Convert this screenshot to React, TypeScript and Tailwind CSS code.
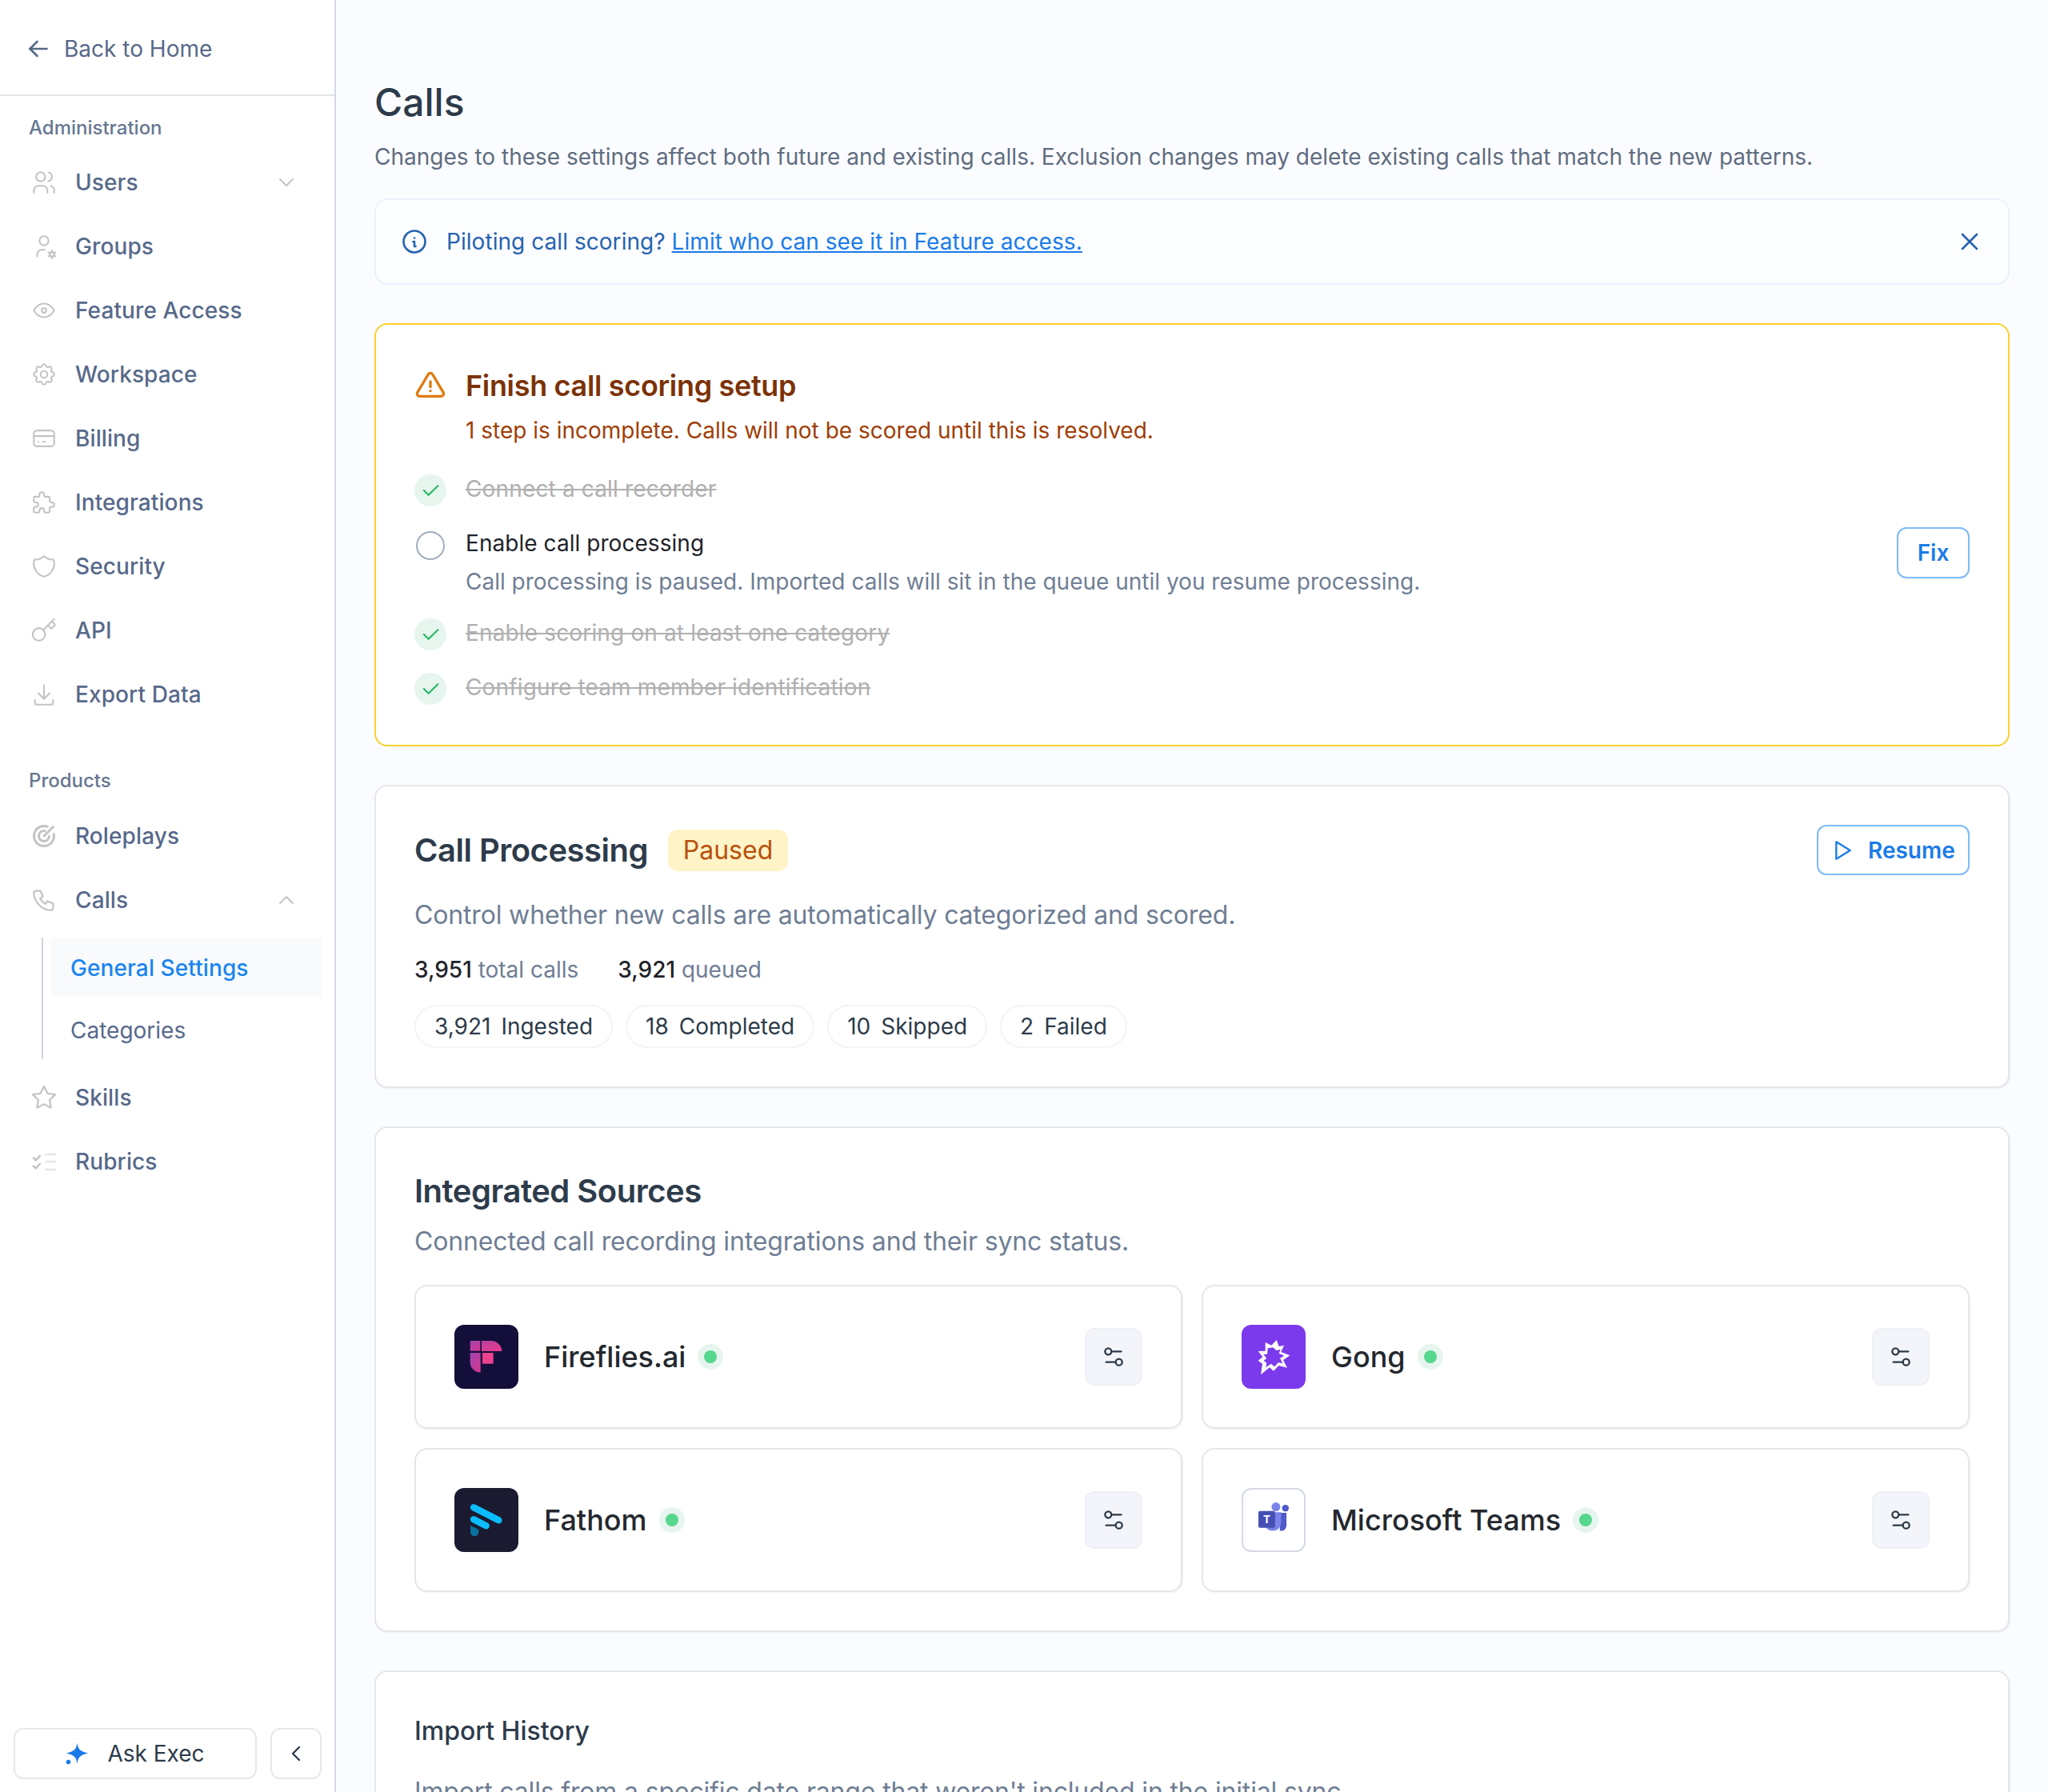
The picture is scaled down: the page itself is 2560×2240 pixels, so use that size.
import React from 'react';
import {
  TbArrowLeft,
  TbUsers,
  TbUserCog,
  TbEye,
  TbSettings,
  TbCreditCard,
  TbPuzzle,
  TbShield,
  TbDownload,
  TbPhone,
  TbStar,
  TbChevronDown,
  TbChevronUp,
  TbChevronLeft,
  TbAlertTriangle,
  TbCheck,
  TbInfoCircle,
  TbX,
  TbPlayerPlay,
} from 'react-icons/tb';
import { Key, Settings2 } from 'lucide-react';

const RubricsIcon = ({ className }: { className?: string }) => (
  <svg viewBox="-3 -3 34 34" fill="none" className={className}>
    <path d="M0.800 9.500l2.800 2.800 5.400-5.400M0.800 19.500l2.800 2.800 5.400-5.400" stroke="currentColor" strokeWidth="2.500" strokeLinecap="round" strokeLinejoin="round" />
    <path d="M16 5h12M16 14h12M16 24h12" stroke="#e6e6e6" strokeWidth="2.500" strokeLinecap="round" />
  </svg>
);

const RoleplaysIcon = ({ className }: { className?: string }) => (
  <svg viewBox="0 0 34 34" fill="none" stroke="currentColor" strokeWidth="3" strokeLinecap="round" className={className}>
    <path d="M21.300 5.250A12.500 12.500 0 1 0 29.300 14.800" />
    <path d="M18.100 10.600A6.500 6.500 0 1 0 23.500 17" />
    <path d="M17 17L28.500 5.500" />
  </svg>
);

const adminItems = [
  { name: 'Users', icon: TbUsers, chevron: TbChevronDown },
  { name: 'Groups', icon: TbUserCog },
  { name: 'Feature Access', icon: TbEye },
  { name: 'Workspace', icon: TbSettings },
  { name: 'Billing', icon: TbCreditCard },
  { name: 'Integrations', icon: TbPuzzle },
  { name: 'Security', icon: TbShield },
  { name: 'API', icon: Key },
  { name: 'Export Data', icon: TbDownload },
];

const NavRow = ({ name, icon: Icon, chevron: Chevron }: { name: string; icon: React.ElementType; chevron?: React.ElementType }) => (
  <div className="flex h-20 items-center pl-[38px] pr-[44px]">
    <Icon className="h-[34px] w-[34px] shrink-0 text-[#c4c4c4]" strokeWidth={1.5} />
    <span className="ml-[22px] flex-1 text-[28px] font-medium leading-10 tracking-[0.1px] text-[#57698a]">{name}</span>
    {Chevron && <Chevron className="h-8 w-8 text-[#c4c4c4]" strokeWidth={1.5} />}
  </div>
);

const Sidebar = () => (
  <aside className="flex h-full w-[420px] shrink-0 flex-col border-r-2 border-[#d3dae3] bg-white">
    <div className="flex h-[120px] items-center border-b-2 border-[#e2e6ec] pl-[30px] pt-[3px]">
      <TbArrowLeft className="h-9 w-9 text-[#57698a]" strokeWidth={1.75} />
      <span className="ml-[14px] text-[28px] leading-10 text-[#57698a]">Back to Home</span>
    </div>

    <div className="mt-6 pl-9 text-[24px] font-medium leading-8 text-[#667791]">Administration</div>
    <nav className="mt-3">
      {adminItems.map((item) => (
        <NavRow key={item.name} {...item} />
      ))}
    </nav>

    <div className="mt-[52px] pl-9 text-[24px] font-medium leading-8 text-[#667791]">Products</div>
    <nav className="mt-[13px]">
      <NavRow name="Roleplays" icon={RoleplaysIcon} />
      <NavRow name="Calls" icon={TbPhone} chevron={TbChevronUp} />
      <div className="ml-[52px] mr-4 mt-[7px] border-l-2 border-[#cdd5e1] pl-[10px]">
        <div className="flex h-[74px] items-center bg-[#f8fafc] pl-6 pt-[2px] text-[28px] font-medium tracking-[0.1px] text-[#1a85f0]">General Settings</div>
        <div className="flex h-[78px] items-center pl-6 pt-[6px] text-[28px] text-[#57698a]">Categories</div>
      </div>
      <div className="mt-2">
        <NavRow name="Skills" icon={TbStar} />
        <NavRow name="Rubrics" icon={RubricsIcon} />
      </div>
    </nav>

    <div className="mt-auto flex gap-[17px] pb-4 pl-[17px] pr-4">
      <button className="flex h-16 flex-1 items-center justify-center gap-6 rounded-xl border-2 border-[#e8e8e8] bg-white text-[28px] text-[#2d3b4a]">
        <svg viewBox="0 0 28 28" className="h-7 w-7 text-[#1a7be8]" fill="currentColor">
          <path d="M14.500 0.500C15.500 8 17.500 11 28 13.500C17.500 16 15.500 19 14.500 27C13.500 19 11.500 16 1 13.500C11.500 11 13.500 8 14.500 0.500Z" />
          <circle cx="3.500" cy="24.500" r="2.800" />
        </svg>
        Ask Exec
      </button>
      <button className="flex h-16 w-16 items-center justify-center rounded-xl border-2 border-[#e8e8e8] bg-white text-[#2d3b4a]">
        <TbChevronLeft className="h-8 w-8" strokeWidth={1.75} />
      </button>
    </div>
  </aside>
);

const DoneStep = ({ label }: { label: string }) => (
  <div className="flex h-11 items-start">
    <span className="mt-[2px] flex h-10 w-10 shrink-0 items-center justify-center rounded-full bg-[#e6f5ee]">
      <TbCheck className="h-7 w-7 text-[#22b866]" strokeWidth={1.75} />
    </span>
    <span className="ml-6 text-[28px] leading-10 tracking-[0.15px] text-[#b0b0b0] line-through">{label}</span>
  </div>
);

const FirefliesLogo = () => (
  <svg viewBox="85 48 240 240" className="h-20 w-20 rounded-xl">
    <defs>
      <linearGradient id="ffA" x1="0" y1="0" x2="1" y2="1">
        <stop offset="0" stopColor="#9c46b0" />
        <stop offset="1" stopColor="#d8358f" />
      </linearGradient>
      <linearGradient id="ffB" x1="0" y1="0" x2="1" y2="1">
        <stop offset="0" stopColor="#b8429f" />
        <stop offset="1" stopColor="#ec3a8a" />
      </linearGradient>
    </defs>
    <rect x="85" y="48" width="240" height="240" fill="#140f3a" />
    <rect x="144" y="108" width="38" height="38" fill="url(#ffA)" />
    <path d="M187 108h36a40 40 0 0 1 40 39h-76z" fill="url(#ffB)" />
    <path d="M144 153h39v74a39 39 0 0 1-39-39z" fill="url(#ffA)" />
    <rect x="190" y="153" width="41" height="41" fill="#ee4290" />
  </svg>
);

const GongLogo = () => (
  <svg viewBox="66 48 240 240" className="h-20 w-20 rounded-xl">
    <rect x="66" y="48" width="240" height="240" fill="#7c3aed" />
    <path
      fillRule="evenodd"
      fill="#fff"
      d="M155 114l23 11 19-20 9 24 19-4-11 25 33 13-25 17 15 29-32-8-19 20-15-13-33 27 6-41-16-12 17-13-17-22 27-1zM164 136l-2 22-14 1 12 15-11 8 11 9-3 17 19-14 14 11 14-16 16 4-10-20 16-9-20-9 6-15-15 4-14-11z"
    />
  </svg>
);

const FathomLogo = () => (
  <svg viewBox="85 660 240 240" className="h-20 w-20 rounded-xl">
    <rect x="85" y="660" width="240" height="240" fill="#1a1b30" />
    <path d="M157 733l94 48M157 778l47 24" stroke="#0bbdff" strokeWidth="25" strokeLinecap="round" />
    <path d="M145 800l31 16v9a15.500 15.500 0 0 1-31 0z" fill="#0a6f9a" />
  </svg>
);

const TeamsLogo = () => (
  <div className="h-20 w-20 overflow-hidden rounded-xl border-2 border-[#d3dae3] bg-white">
    <svg viewBox="68 662 236 236" className="h-full w-full">
      <circle cx="232" cy="734" r="13" fill="#5059c9" />
      <path d="M210 752h26v50a20 20 0 0 1-20 20h-6z" fill="#5059c9" />
      <circle cx="195" cy="729" r="17" fill="#7b83eb" />
      <path d="M150 750h65v45a33 33 0 0 1-65 0z" fill="#7b83eb" />
      <rect x="127" y="745" width="65" height="65" rx="6" fill="#4650b4" />
      <text x="159.500" y="791" textAnchor="middle" fill="#fff" fontFamily="Inter, sans-serif" fontSize="42" fontWeight="700">T</text>
    </svg>
  </div>
);

const sources = [
  { name: 'Fireflies.ai', logo: FirefliesLogo },
  { name: 'Gong', logo: GongLogo },
  { name: 'Fathom', logo: FathomLogo },
  { name: 'Microsoft Teams', logo: TeamsLogo },
];

const counts = [
  { value: '3,921', label: 'Ingested' },
  { value: '18', label: 'Completed' },
  { value: '10', label: 'Skipped' },
  { value: '2', label: 'Failed' },
];

const cardClass = 'rounded-2xl border-2 border-[#e5e7eb] bg-white shadow-[1px_1px_2px_rgba(0,0,0,0.06)]';

export default function App() {
  return (
    <div className="flex h-[2240px] overflow-hidden bg-[#fbfcff] font-['Inter',sans-serif]">
      <Sidebar />

      <main className="min-w-0 flex-1 px-12 pt-[98px]">
        <h1 className="text-[48px] font-medium leading-[60px] text-[#2d3b4a]">Calls</h1>
        <p className="mt-[18px] text-[28px] leading-10 text-[#5f6d80]">
          Changes to these settings affect both future and existing calls. Exclusion changes may delete existing calls that match the new patterns.
        </p>

        {/* Info banner */}
        <div className="mt-8 flex h-[108px] items-center rounded-2xl border-2 border-[#e9f1fc] bg-[#fcfdff] px-[30px]">
          <TbInfoCircle className="h-9 w-9 text-[#2563b0]" strokeWidth={1.75} />
          <span className="ml-[22px] flex-1 text-[28px] leading-10 tracking-[0.05px] text-[#2563b0]">
            Piloting call scoring?{' '}
            <span className="text-[#1a7be8] underline">Limit who can see it in Feature access.</span>
          </span>
          <TbX className="h-9 w-9 text-[#2563b0]" strokeWidth={1.75} />
        </div>

        <div className="mt-12 flex flex-col gap-12">
          {/* Setup warning */}
          <section className="rounded-2xl border-2 border-[#fcd02e] bg-white p-12">
            <div className="mt-[2px] flex h-[52px] items-center">
              <TbAlertTriangle className="h-10 w-10 shrink-0 text-[#e07a10]" strokeWidth={2} />
              <h2 className="ml-6 text-[36px] font-semibold leading-[52px] tracking-[-0.33px] text-[#7c3206]">Finish call scoring setup</h2>
            </div>
            <p className="ml-16 mt-[10px] text-[28px] leading-10 text-[#a03d05]">
              1 step is incomplete. Calls will not be scored until this is resolved.
            </p>

            <div className="mt-[33px] flex flex-col gap-6">
              <DoneStep label="Connect a call recorder" />
              <div className="flex items-start">
                <span className="ml-[2px] mt-[5px] h-9 w-9 shrink-0 rounded-full border-2 border-[#a4aebd]" />
                <div className="ml-[26px] flex-1">
                  <div className="text-[28px] leading-10 tracking-[0.05px] text-[#1f2329]">Enable call processing</div>
                  <div className="mt-2 text-[28px] leading-10 text-[#6f7e94]">
                    Call processing is paused. Imported calls will sit in the queue until you resume processing.
                  </div>
                </div>
                <button className="h-16 w-[91px] rounded-xl border-2 border-[#7dbafa] bg-white text-[28px] font-semibold text-[#1a7be8]">Fix</button>
              </div>
              <DoneStep label="Enable scoring on at least one category" />
              <DoneStep label="Configure team member identification" />
            </div>
          </section>

          {/* Call processing */}
          <section className={`${cardClass} p-12`}>
            <div className="flex items-center justify-between">
              <div className="flex items-center">
                <h2 className="text-[40px] font-semibold leading-[56px] tracking-[-0.5px] text-[#2d3b4a]">Call Processing</h2>
                <span className="ml-[25px] flex h-[52px] w-[150px] items-center justify-center rounded-xl bg-[#fff3c8] text-[32px] text-[#b8500a]">Paused</span>
              </div>
              <button className="flex h-[63px] w-[191px] items-center gap-[17px] rounded-xl border-2 border-[#7dbafa] bg-white pl-[13px] text-[28px] font-semibold text-[#1a7be8]">
                <TbPlayerPlay className="h-8 w-8" strokeWidth={1.75} />
                Resume
              </button>
            </div>
            <p className="mt-[26px] text-[32px] leading-[48px] tracking-[-0.16px] text-[#6f7e94]">Control whether new calls are automatically categorized and scored.</p>
            <div className="mt-6 flex gap-[49px] text-[28px] leading-10">
              <span className="text-[#6f7e94]">
                <span className="font-medium text-[#1f2329]">3,951</span> total calls
              </span>
              <span className="text-[#6f7e94]">
                <span className="font-medium text-[#1f2329]">3,921</span> queued
              </span>
            </div>
            <div className="mt-6 flex gap-4">
              {counts.map((count) => (
                <span key={count.label} className="flex h-[54px] items-center gap-[13px] rounded-full border-2 border-[#f2f4f9] px-[23px] text-[28px] text-[#2d3b4a]">
                  <span>{count.value}</span>
                  <span>{count.label}</span>
                </span>
              ))}
            </div>
          </section>

          {/* Integrated sources */}
          <section className={`${cardClass} p-12`}>
            <h2 className="mt-[3px] text-[40px] font-semibold leading-[56px] tracking-[-0.5px] text-[#2d3b4a]">Integrated Sources</h2>
            <p className="mt-[11px] text-[32px] leading-[48px] tracking-[-0.14px] text-[#6f7e94]">Connected call recording integrations and their sync status.</p>
            <div className="mt-[30px] grid grid-cols-2 gap-6">
              {sources.map((source) => {
                const Logo = source.logo;
                return (
                  <div key={source.name} className={`${cardClass} flex h-[180px] items-center px-12`}>
                    <Logo />
                    <span className="ml-8 text-[36px] font-medium text-[#24282e]">{source.name}</span>
                    <span className="ml-[15px] flex h-8 w-8 items-center justify-center rounded-full bg-[#e6f5ee]">
                      <span className="h-4 w-4 rounded-full bg-[#57d68d]" />
                    </span>
                    <button className="ml-auto flex h-[72px] w-[72px] items-center justify-center rounded-xl border-2 border-[#eff1f6] bg-[#f4f5fa] text-[#2d3b4a]">
                      <Settings2 className="h-8 w-8" strokeWidth={1.75} />
                    </button>
                  </div>
                );
              })}
            </div>
          </section>

          {/* Import history */}
          <section className={`${cardClass} p-12`}>
            <h2 className="mt-[2px] text-[32px] font-medium leading-[48px] text-[#2d3b4a]">Import History</h2>
            <p className="mt-7 text-[32px] leading-[48px] tracking-[-0.16px] text-[#6f7e94]">Import calls from a specific date range that weren't included in the initial sync.</p>
          </section>
        </div>
      </main>
    </div>
  );
}
